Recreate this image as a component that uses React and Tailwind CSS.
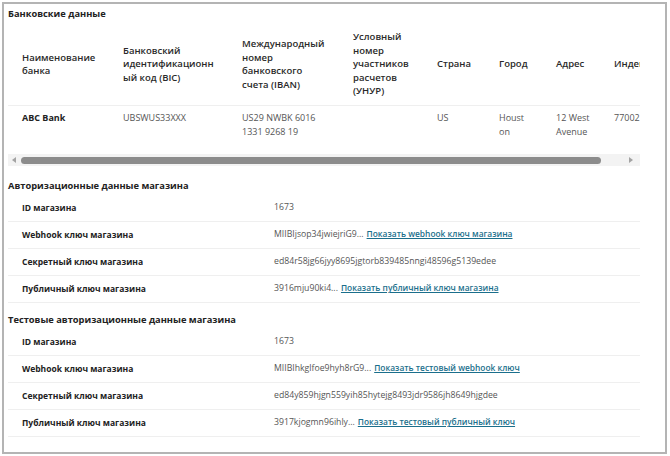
import React from 'react';

const bankCols = [
  { title: 'Наименование банка', value: 'ABC Bank', w: 'w-[101px]', pr: 'pr-[8px]', strong: true },
  { title: 'Банковский идентификационный код (BIC)', value: 'UBSWUS33XXX', w: 'w-[119px]', pr: 'pr-[8px]' },
  { title: 'Международный номер банковского счета (IBAN)', value: 'US29 NWBK 6016 1331 9268 19', w: 'w-[111px]', pr: 'pr-[8px]' },
  { title: 'Условный номер участников расчетов (УНУР)', value: '', w: 'w-[84px]', pr: 'pr-[8px]' },
  { title: 'Страна', value: 'US', w: 'w-[62px]', pr: 'pr-[8px]' },
  { title: 'Город', value: 'Houston', w: 'w-[57px]', pr: 'pr-[15px]' },
  { title: 'Адрес', value: '12 West Avenue', w: 'w-[58px]', pr: 'pr-[7px]' },
  { title: 'Индекс', value: '77002', w: 'w-[80px]', pr: 'pr-[8px]' },
];

const authRows = [
  { label: 'ID магазина', value: '1673' },
  { label: 'Webhook ключ магазина', value: 'MIIBIjsop34jwiejriG9...', link: 'Показать webhook ключ магазина' },
  { label: 'Секретный ключ магазина', value: 'ed84r58jg66jyy8695jgtorb839485nngi48596g5139edee' },
  { label: 'Публичный ключ магазина', value: '3916mju90ki4...', link: 'Показать публичный ключ магазина' },
];

const testRows = [
  { label: 'ID магазина', value: '1673' },
  { label: 'Webhook ключ магазина', value: 'MIIBIhkglfoe9hyh8rG9...', link: 'Показать тестовый webhook ключ' },
  { label: 'Секретный ключ магазина', value: 'ed84y859hjgn559yih85hytejg8493jdr9586jh8649hjgdee' },
  { label: 'Публичный ключ магазина', value: '3917kjogmn96ihly...', link: 'Показать тестовый публичный ключ' },
];

const SectionTitle = ({ children }) => (
  <h2 className="text-[9.3px] leading-[14px] font-bold text-[#222]">{children}</h2>
);

const KeyRows = ({ rows }) => (
  <div className="w-[632px]">
    {rows.map((r) => (
      <div key={r.label} className="flex items-center h-[27px] border-b border-[#efefef]">
        <div className="w-[266px] pl-[14px] text-[8.5px] font-bold text-[#222]">{r.label}</div>
        <div className="text-[8.7px] text-[#555]">
          {r.value}
          {r.link && (
            <a href="#" className="ml-[3px] text-[8.4px] font-semibold text-[#1b6f8c] underline">
              {r.link}
            </a>
          )}
        </div>
      </div>
    ))}
  </div>
);

export default function App() {
  return (
    <div className="w-[670px] h-[456px] bg-white p-[2px] font-['Open_Sans',sans-serif]">
      <div className="h-[452px] w-[665px] border-2 border-[#b4b4b4] px-[4px] pt-[3px] overflow-hidden">
        <SectionTitle>Банковские данные</SectionTitle>

        {/* Bank table */}
        <div className="w-[632px] overflow-hidden mt-[2px]">
          <div className="flex w-max border-b border-[#efefef] h-[83px] items-center">
            {bankCols.map((c) => (
              <div key={c.title} className={`${c.w} pl-[14px] pr-[8px] text-[9.5px] leading-[13.5px] font-semibold text-[#2a2a2a] [overflow-wrap:anywhere] shrink-0`}>
                {c.title}
              </div>
            ))}
          </div>
          <div className="flex w-max h-[48px] items-start pt-[5px]">
            {bankCols.map((c) => (
              <div
                key={c.title}
                className={`${c.w} pl-[14px] ${c.pr} text-[9px] leading-[13.5px] [overflow-wrap:anywhere] shrink-0 ${c.strong ? 'font-bold text-[#222]' : 'text-[#555]'}`}
              >
                {c.value}
              </div>
            ))}
          </div>
        </div>

        {/* Scrollbar */}
        <div className="w-[632px] h-[12px] bg-[#f3f3f3] flex items-center px-[4px] gap-[5px]">
          <span className="w-0 h-0 border-y-[3px] border-y-transparent border-r-[4px] border-r-[#a3a3a3]" />
          <div className="h-[7px] w-[580px] rounded-full bg-[#8c8c8c]" />
          <div className="flex-1" />
          <span className="w-0 h-0 border-y-[3px] border-y-transparent border-l-[4px] border-l-[#a3a3a3] mr-[3px]" />
        </div>

        <div className="mt-[13px]">
          <SectionTitle>Авторизационные данные магазина</SectionTitle>
        </div>
        <div className="mt-[2px]">
          <KeyRows rows={authRows} />
        </div>

        <div className="mt-[10px]">
          <SectionTitle>Тестовые авторизационные данные магазина</SectionTitle>
        </div>
        <div className="mt-[2px]">
          <KeyRows rows={testRows} />
        </div>
      </div>
    </div>
  );
}
